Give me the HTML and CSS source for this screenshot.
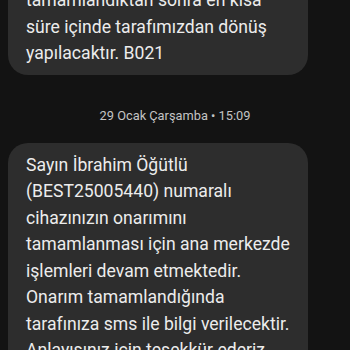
FILE: index.html
```html
<!DOCTYPE html>
<html lang="tr">
<head>
<meta charset="utf-8">
<link rel="stylesheet" href="styles.css">
</head>
<body>
<div class="thread">
  <div class="bubble first">tamamlandıktan sonra en kısa süre içinde tarafımızdan dönüş yapılacaktır. B021</div>
  <div class="stamp">29 Ocak Çarşamba • 15:09</div>
  <div class="bubble">Sayın İbrahim Öğütlü (BEST25005440) numaralı cihazınızın onarımını tamamlanması için ana merkezde işlemleri devam etmektedir. Onarım tamamlandığında tarafınıza sms ile bilgi verilecektir. Anlayışınız için teşekkür ederiz.</div>
</div>
</body>
</html>
```
FILE: styles.css
```css
html, body {
  margin: 0;
  padding: 0;
  background: #131313;
  height: 100%;
  overflow: hidden;
}
.thread {
  display: flex;
  flex-direction: column;
  align-items: flex-start;
  padding: 0 8px;
  margin-top: -21.5px;
}
.bubble {
  box-sizing: border-box;
  width: 300px;
  background: #2d2d2d;
  color: #ececec;
  font-family: Roboto, "Noto Sans", sans-serif;
  font-size: 17.6px;
  line-height: 26.5px;
  padding: 8.5px 18px;
  border-radius: 20px;
}
.stamp {
  align-self: stretch;
  text-align: center;
  color: #c4c4c4;
  font-family: Roboto, "Noto Sans", sans-serif;
  font-size: 12.8px;
  line-height: 16px;
  padding: 33px 0 19px;
}
```
